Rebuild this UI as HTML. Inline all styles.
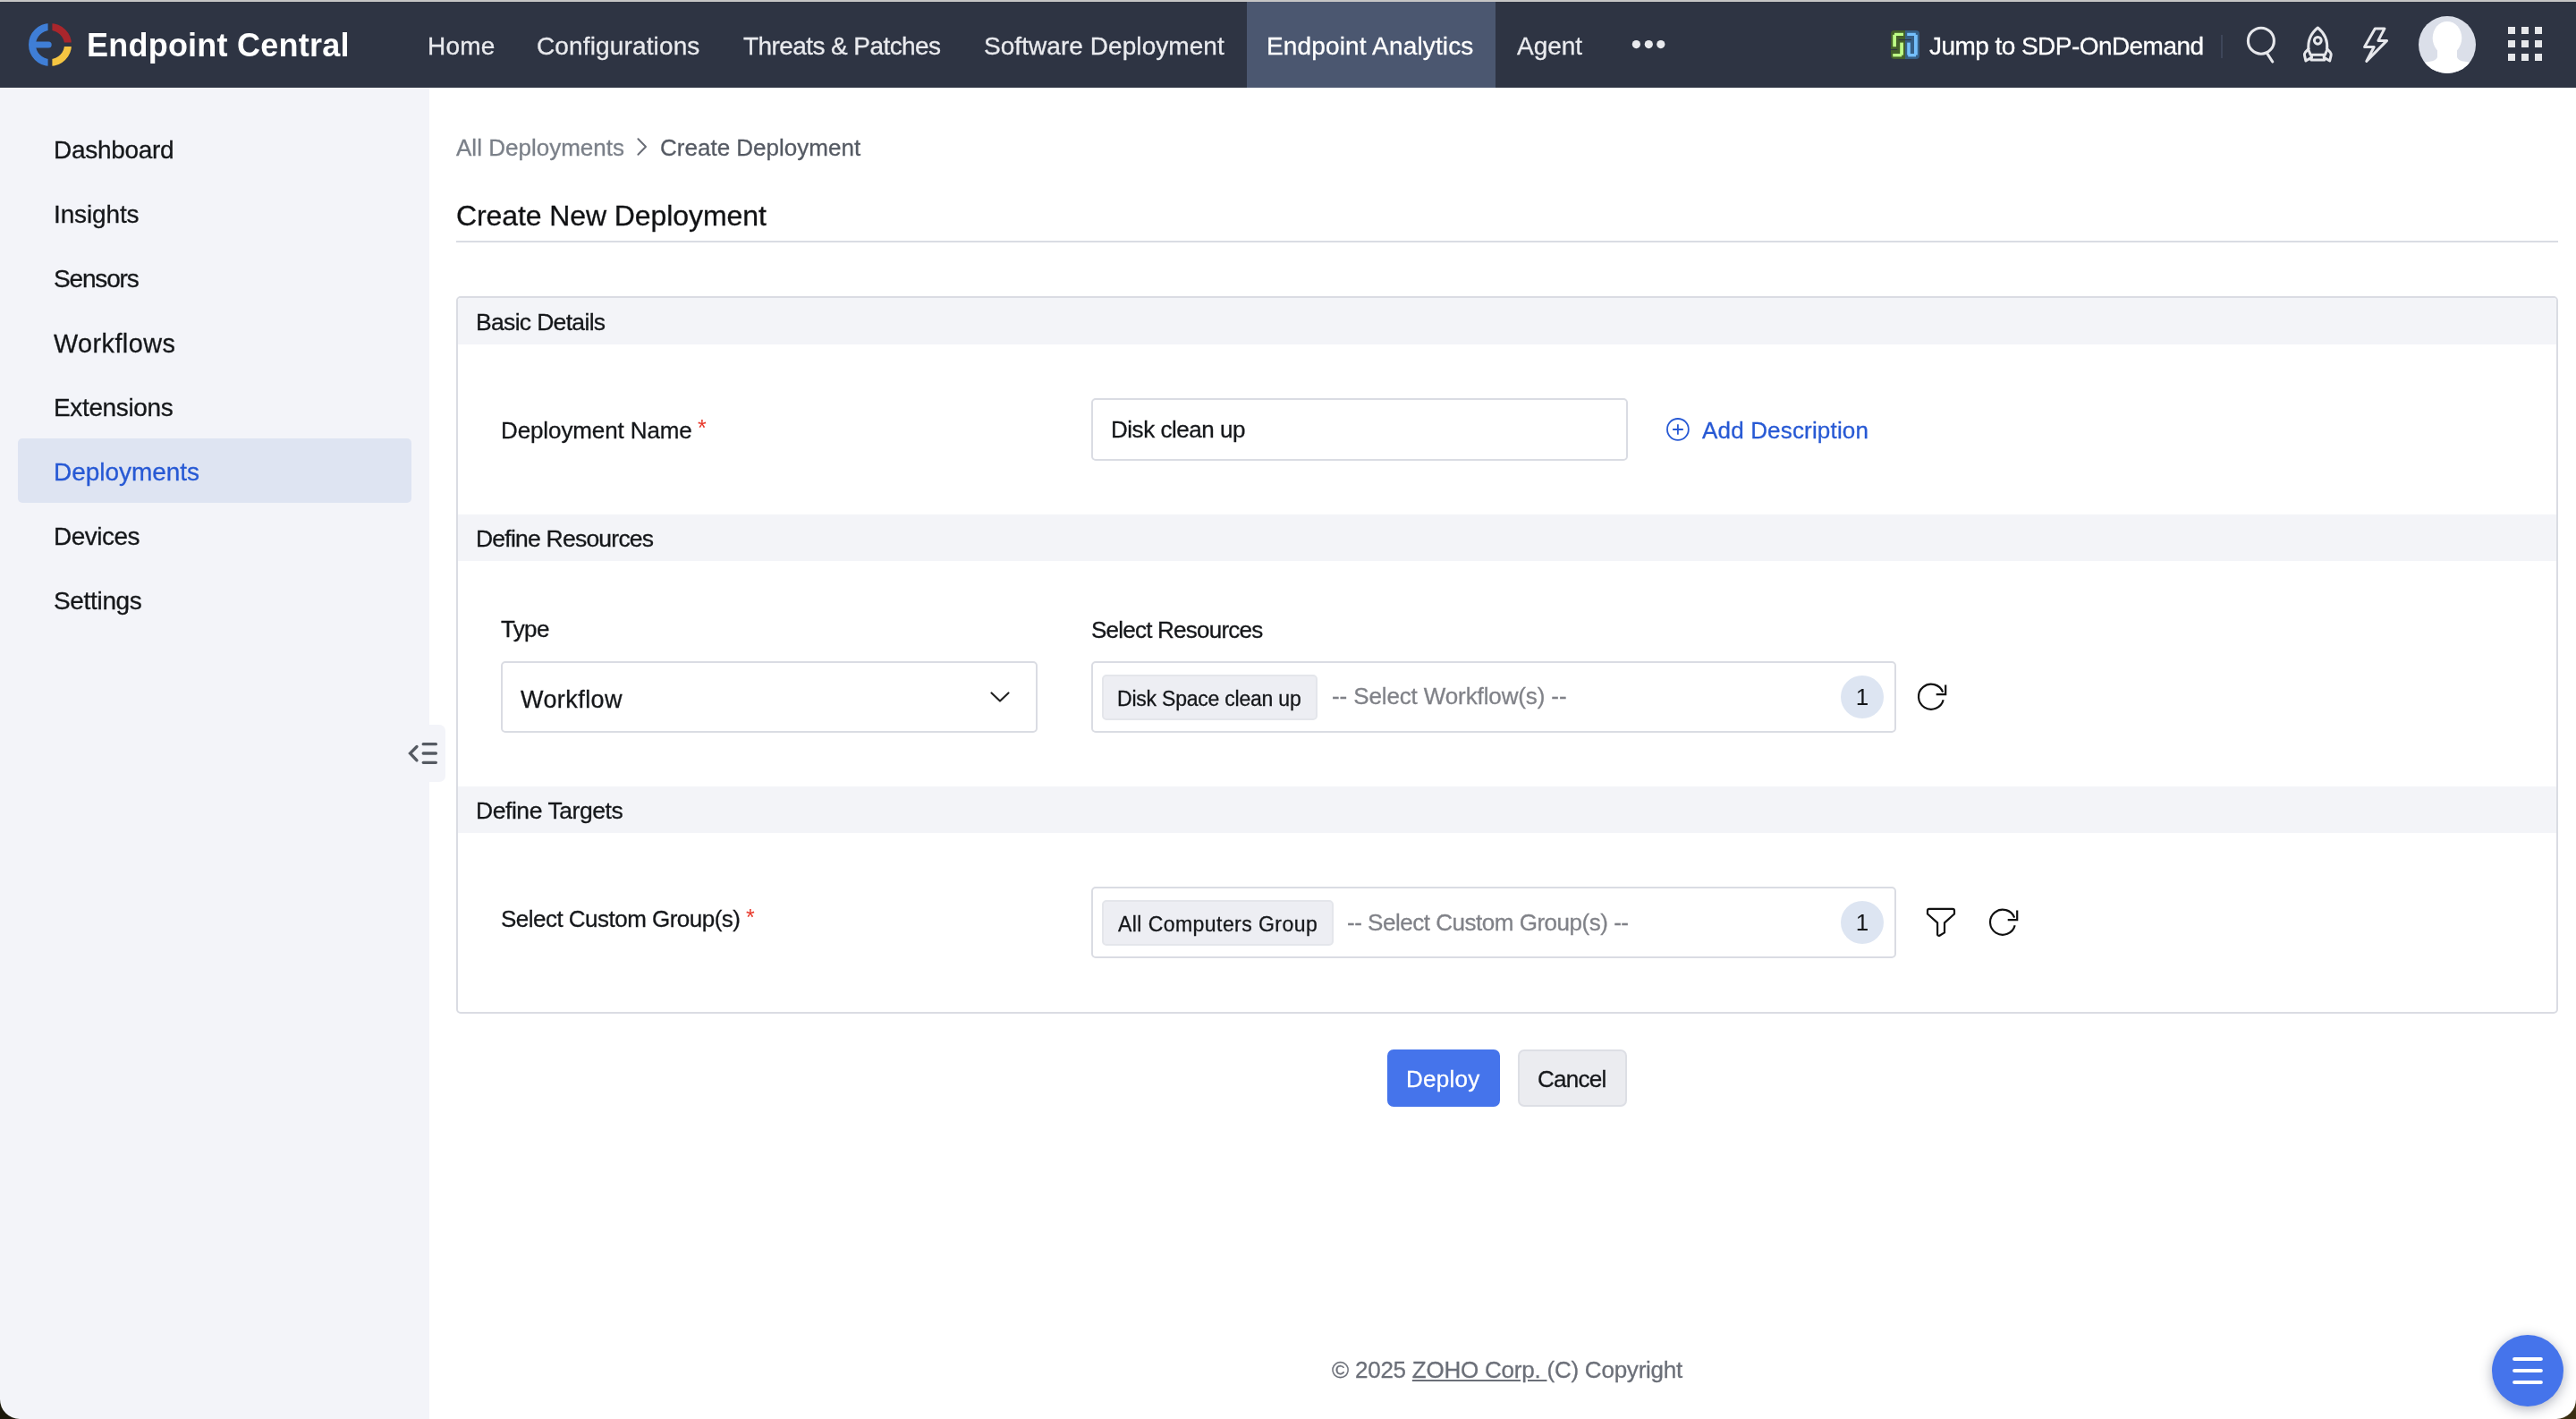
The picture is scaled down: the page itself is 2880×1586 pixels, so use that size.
<!DOCTYPE html>
<html lang="en">
<head>
<meta charset="utf-8">
<title>Endpoint Central - Create Deployment</title>
<style>
*{box-sizing:border-box;margin:0;padding:0}
html,body{width:2880px;height:1586px;overflow:hidden;background:#fff}
body{position:relative;font-family:"Liberation Sans",sans-serif;color:#15171a}
.t{will-change:transform;-webkit-text-stroke:0.3px currentColor;position:absolute;white-space:nowrap;line-height:40px;height:40px;display:block}
.abs{position:absolute}
svg.i{position:absolute;overflow:visible}
.topstrip{position:absolute;left:0;top:0;width:2880px;height:2px;background:linear-gradient(#c8c8c8 0,#c8c8c8 50%,#d4d3d1 50%,#d4d3d1 100%)}
header{position:absolute;left:0;top:2px;width:2880px;height:96px;background:#2e3443;box-shadow:0 1px 3px rgba(0,0,0,.25)}
header .t,header .abs,header svg.i{margin-top:-2px}
.navactive{position:absolute;left:1393.5px;top:2px;width:278px;height:96px;background:#4b5770}
aside{position:absolute;left:0;top:98px;width:480px;height:1488px;background:#f3f4f9}
aside .t{margin-top:-98px}
.sactive{position:absolute;left:20px;top:392px;width:440px;height:72px;border-radius:5px;background:#dee4f2}
.stab{position:absolute;left:480px;top:810px;width:18px;height:64px;background:#f3f4f9;border-radius:0 7px 7px 0}
main{position:absolute;left:480px;top:98px;width:2400px;height:1488px;background:#fff}
main .t,main .abs,main svg.i{margin-left:-480px;margin-top:-98px}
.hr{left:510px;top:269px;width:2350px;height:2px;background:#dadce3}
.panel{left:510px;top:331px;width:2350px;height:802px;border:2px solid #dadce3;border-radius:5px;background:#fff}
.sec{left:512px;width:2346px;height:52px;background:#f3f4f8}
.box{border:2px solid #dadce3;border-radius:5px;background:#fff}
.chip{border:2px solid #e4e6eb;border-radius:5px;background:#edeef3}
.badge{will-change:transform;width:48px;height:48px;border-radius:50%;background:#dde5f2;text-align:center;font-size:26px;line-height:48px;color:#15171a}
.star{color:#e8392b;font-size:25px;-webkit-text-stroke:0}
.btn{border-radius:7px}
.fab{left:2786px;top:1492px;width:80px;height:80px;border-radius:50%;background:#4574eb;box-shadow:0 3px 14px rgba(40,50,80,.38)}
</style>
</head>
<body>
<div class="topstrip"></div>

<header>
  <svg class="i" style="left:24px;top:18px" width="64" height="64" viewBox="24 18 64 64" fill="none" stroke-width="8">
    <path d="M56 30A20 20 0 0 0 56 70" stroke="#3f7ed6"/>
    <path d="M56 30A20 20 0 0 1 76 50" stroke="#a9262c"/>
    <path d="M76 50A20 20 0 0 1 56 70" stroke="#f5c542"/>
    <path d="M53.6 24H58.4V40H53.6ZM53.6 60H58.4V76H53.6ZM68 47.4H82V52H68Z" fill="#2e3443" stroke="none"/>
    <path d="M37 50H54.2" stroke="#3f7ed6" stroke-width="7" stroke-linecap="round"/>
  </svg>
  <span class="t" style="left:97.2px;top:31.1px;font-size:36px;font-weight:700;-webkit-text-stroke:0;letter-spacing:0.23px;color:#ffffff;">Endpoint Central</span>
  <nav>
    <div class="navactive abs"></div>
    <span class="t" style="left:477.7px;top:31.9px;font-size:28px;letter-spacing:0.23px;color:#e9eaee;">Home</span>
    <span class="t" style="left:600.2px;top:31.9px;font-size:28px;letter-spacing:0.14px;color:#e9eaee;">Configurations</span>
    <span class="t" style="left:831.2px;top:31.9px;font-size:28px;letter-spacing:-0.58px;color:#e9eaee;">Threats &amp; Patches</span>
    <span class="t" style="left:1099.9px;top:31.9px;font-size:28px;letter-spacing:0.06px;color:#e9eaee;">Software Deployment</span>
    <span class="t" style="left:1416.4px;top:31.9px;font-size:28px;letter-spacing:0.15px;color:#ffffff;">Endpoint Analytics</span>
    <span class="t" style="left:1696.0px;top:31.9px;font-size:28px;letter-spacing:-0.05px;color:#e9eaee;">Agent</span>
    <svg class="i" style="left:1820px;top:40px" width="48" height="20" viewBox="1820 40 48 20" fill="#e9eaee">
      <circle cx="1829.4" cy="49.6" r="4.6"/><circle cx="1843.3" cy="49.6" r="4.6"/><circle cx="1856.8" cy="49.6" r="4.6"/>
    </svg>
  </nav>
  <!-- SDP icon -->
  <svg class="i" style="left:2114px;top:34px" width="32" height="32" viewBox="0 0 16 16" shape-rendering="auto">
    <path d="M2 0H8V16H2A2 2 0 0 1 0 14V2A2 2 0 0 1 2 0Z" fill="#44602a"/>
    <path d="M8 0H14A2 2 0 0 1 16 2V14A2 2 0 0 1 14 16H8Z" fill="#365f85"/>
    <rect x="2" y="1.4" width="5" height="1.6" fill="#bdfc85"/>
    <rect x="1.1" y="2.4" width="1.9" height="6.7" fill="#bdfc85"/>
    <rect x="5.1" y="6.8" width="1.9" height="7" fill="#bdfc85"/>
    <rect x="1.1" y="13" width="5" height="1.7" fill="#bdfc85"/>
    <rect x="4.3" y="5" width="7.2" height="0.5" fill="#2e3443"/>
    <rect x="0" y="10.5" width="3.6" height="0.5" fill="#2e3443"/>
    <rect x="9.1" y="1.4" width="4.8" height="1.6" fill="#74c0fc"/>
    <rect x="13" y="2.4" width="1.9" height="11.4" fill="#74c0fc"/>
    <rect x="9.1" y="6.8" width="1.8" height="7" fill="#74c0fc"/>
    <rect x="9.6" y="13" width="4.4" height="1.7" fill="#74c0fc"/>
  </svg>
  <span class="t" style="left:2156.7px;top:31.9px;font-size:28px;letter-spacing:-0.55px;color:#ffffff;">Jump to SDP-OnDemand</span>
  <div class="abs" style="left:2482.5px;top:39px;width:2px;height:26px;background:#3e4659"></div>
  <!-- search -->
  <svg class="i" style="left:2505px;top:25px" width="50" height="50" viewBox="2505 25 50 50" fill="none" stroke="#e6e7eb" stroke-width="3.1" stroke-linecap="round">
    <circle cx="2527.9" cy="45.7" r="14.5"/>
    <path d="M2534.6 59.6L2540.7 69"/>
  </svg>
  <!-- rocket -->
  <svg class="i" style="left:2570px;top:25px" width="44" height="50" viewBox="2570 25 44 50" fill="none" stroke="#e6e7eb" stroke-width="3" stroke-linejoin="round" stroke-linecap="round">
    <path d="M2591.3 31C2583.4 37.3 2579.9 46 2581 56L2583.2 61.2H2599.4L2601.6 56C2602.7 46 2599.2 37.3 2591.3 31Z"/>
    <circle cx="2591.3" cy="45.3" r="3.9"/>
    <path d="M2581 54.5L2577.3 58.6C2576.3 59.8 2576.2 60.6 2576.5 61.8L2577.9 68L2584.3 64.2"/>
    <path d="M2601.6 54.5L2605.3 58.6C2606.3 59.8 2606.4 60.6 2606.1 61.8L2604.7 68L2598.3 64.2"/>
    <path d="M2584.6 61.4L2583.9 66.9H2598.7L2598 61.4"/>
  </svg>
  <!-- bolt -->
  <svg class="i" style="left:2636px;top:25px" width="40" height="50" viewBox="2636 25 40 50" fill="none" stroke="#e6e7eb" stroke-width="3" stroke-linejoin="round">
    <path d="M2655.3 31.9H2666L2658.9 45.4H2668.6L2645.8 68.4L2654.2 52.5H2643.6Z"/>
  </svg>
  <!-- avatar -->
  <svg class="i" style="left:2704px;top:18px" width="64" height="64" viewBox="0 0 64 64">
    <defs><clipPath id="av"><circle cx="32" cy="32" r="32"/></clipPath></defs>
    <circle cx="32" cy="32" r="32" fill="#dbdfe9"/>
    <g clip-path="url(#av)" fill="#ffffff">
      <ellipse cx="32" cy="24.5" rx="16.3" ry="18.6"/>
      <path d="M21 38H43V45C43 48 46 49.6 50 50.6L62 52.5V66H2V52.5L14 50.6C18 49.6 21 48 21 45Z"/>
    </g>
  </svg>
  <!-- app grid -->
  <svg class="i" style="left:2804px;top:30px" width="38" height="38" viewBox="0 0 38 38" fill="#e6e7ea">
    <rect x="0" y="0" width="8" height="8"/><rect x="15" y="0" width="8" height="8"/><rect x="30" y="0" width="8" height="8"/>
    <rect x="0" y="15" width="8" height="8"/><rect x="15" y="15" width="8" height="8"/><rect x="30" y="15" width="8" height="8"/>
    <rect x="0" y="30" width="8" height="8"/><rect x="15" y="30" width="8" height="8"/><rect x="30" y="30" width="8" height="8"/>
  </svg>
</header>

<aside>
  <div class="sactive"></div>
  <span class="t" style="left:60.0px;top:147.5px;font-size:28px;letter-spacing:-0.30px;color:#15171a;">Dashboard</span>
  <span class="t" style="left:60.0px;top:219.5px;font-size:28px;letter-spacing:-0.14px;color:#15171a;">Insights</span>
  <span class="t" style="left:60.0px;top:291.5px;font-size:28px;letter-spacing:-1.17px;color:#15171a;">Sensors</span>
  <span class="t" style="left:60.0px;top:364.0px;font-size:28.8px;letter-spacing:0.44px;color:#15171a;">Workflows</span>
  <span class="t" style="left:60.0px;top:435.5px;font-size:28px;letter-spacing:-0.36px;color:#15171a;">Extensions</span>
  <span class="t" style="left:60.0px;top:507.5px;font-size:28px;letter-spacing:-0.03px;color:#2759d4;">Deployments</span>
  <span class="t" style="left:60.0px;top:579.5px;font-size:28px;letter-spacing:-0.52px;color:#15171a;">Devices</span>
  <span class="t" style="left:60.0px;top:651.5px;font-size:28px;letter-spacing:-0.33px;color:#15171a;">Settings</span>
</aside>

<main>
  <!-- breadcrumb -->
  <span class="t" style="left:510.0px;top:144.7px;font-size:26px;letter-spacing:0.01px;color:#7b8089;">All Deployments</span>
  <svg class="i" style="left:706px;top:150px" width="24" height="30" viewBox="706 150 24 30" fill="none" stroke="#6a6e77" stroke-width="2" stroke-linecap="round" stroke-linejoin="round">
    <path d="M713.4 155.2L722 164L713.4 172.8"/>
  </svg>
  <span class="t" style="left:737.5px;top:144.7px;font-size:26px;letter-spacing:0.01px;color:#555a63;">Create Deployment</span>
  <span class="t" style="left:510.0px;top:221.2px;font-size:32px;letter-spacing:-0.09px;color:#111214;">Create New Deployment</span>
  <div class="abs hr"></div>

  <section class="abs panel"></section>
  <div class="abs sec" style="top:333px;border-radius:3px 3px 0 0"></div>
  <span class="t" style="left:532.0px;top:339.8px;font-size:26.5px;letter-spacing:-0.67px;color:#15171a;">Basic Details</span>
  <span class="t" style="left:560.0px;top:460.6px;font-size:26px;letter-spacing:-0.11px;color:#15171a;">Deployment Name</span>
  <span class="t star" style="left:779.6px;top:458px">*</span>
  <div class="abs box" style="left:1220px;top:445px;width:600px;height:70px"></div>
  <span class="t" style="left:1242.0px;top:460.0px;font-size:26px;letter-spacing:-0.47px;color:#15171a;">Disk clean up</span>
  <svg class="i" style="left:1860px;top:464px" width="32" height="32" viewBox="1860 464 32 32" fill="none" stroke="#2759d4" stroke-width="1.8" stroke-linecap="butt">
    <circle cx="1875.9" cy="479.9" r="11.9"/>
    <path d="M1870.1 480H1881.8M1875.9 474.2V485.8"/>
  </svg>
  <span class="t" style="left:1902.6px;top:460.5px;font-size:26px;letter-spacing:0.17px;color:#2759d4;">Add Description</span>

  <div class="abs sec" style="top:575px"></div>
  <span class="t" style="left:532.0px;top:581.8px;font-size:26.5px;letter-spacing:-0.77px;color:#15171a;">Define Resources</span>
  <span class="t" style="left:560.0px;top:683.2px;font-size:26px;letter-spacing:-0.67px;color:#15171a;">Type</span>
  <div class="abs box" style="left:560px;top:739px;width:600px;height:80px"></div>
  <span class="t" style="left:582.0px;top:762.2px;font-size:27px;letter-spacing:0.43px;color:#15171a;">Workflow</span>
  <svg class="i" style="left:1100px;top:765px" width="36" height="28" viewBox="1100 765 36 28" fill="none" stroke="#222" stroke-width="2.2" stroke-linecap="round" stroke-linejoin="round">
    <path d="M1108.5 774.5L1118 783.5L1127.5 774.5"/>
  </svg>
  <span class="t" style="left:1220.0px;top:683.5px;font-size:26px;letter-spacing:-0.77px;color:#15171a;">Select Resources</span>
  <div class="abs box" style="left:1220px;top:739px;width:900px;height:80px"></div>
  <div class="abs chip" style="left:1232px;top:753.5px;width:241px;height:51px"></div>
  <span class="t" style="left:1249.2px;top:760.9px;font-size:23px;letter-spacing:-0.22px;color:#15171a;">Disk Space clean up</span>
  <span class="t" style="left:1488.5px;top:758.4px;font-size:26px;letter-spacing:-0.12px;color:#808288;">-- Select Workflow(s) --</span>
  <div class="abs badge" style="left:2058px;top:755px">1</div>
  <svg class="i" style="left:2140px;top:760px" width="40" height="40" viewBox="2140 760 40 40" fill="none" stroke="#111" stroke-width="2.2" stroke-linecap="butt" stroke-linejoin="miter">
    <path d="M2172.17 773.71A14.05 14.05 0 1 0 2172.66 782.24"/>
    <path d="M2175.2 765.6V776.1H2164.7"/>
  </svg>

  <div class="abs sec" style="top:879px"></div>
  <span class="t" style="left:532.0px;top:885.8px;font-size:26.5px;letter-spacing:-0.44px;color:#15171a;">Define Targets</span>
  <span class="t" style="left:560.0px;top:1007.0px;font-size:26px;letter-spacing:-0.52px;color:#15171a;">Select Custom Group(s)</span>
  <span class="t star" style="left:834.2px;top:1004.5px">*</span>
  <div class="abs box" style="left:1220px;top:991px;width:900px;height:80px"></div>
  <div class="abs chip" style="left:1232px;top:1005.5px;width:259px;height:51px"></div>
  <span class="t" style="left:1250.4px;top:1013.0px;font-size:23px;letter-spacing:0.44px;color:#15171a;">All Computers Group</span>
  <span class="t" style="left:1506.4px;top:1010.6px;font-size:26px;letter-spacing:-0.48px;color:#808288;">-- Select Custom Group(s) --</span>
  <div class="abs badge" style="left:2058px;top:1007px">1</div>
  <svg class="i" style="left:2148px;top:1008px" width="44" height="44" viewBox="2148 1008 44 44" fill="none" stroke="#111" stroke-width="2.2" stroke-linejoin="round" stroke-linecap="round">
    <path d="M2157 1015.9H2183A2 2 0 0 1 2185 1017.9V1021.5L2174 1031.4V1042.4L2168.4 1045.7A1.6 1.6 0 0 1 2166.1 1044.4V1031.4L2155 1021.5V1017.9A2 2 0 0 1 2157 1015.9Z"/>
  </svg>
  <svg class="i" style="left:2220px;top:1012px" width="40" height="40" viewBox="2220 1012 40 40" fill="none" stroke="#111" stroke-width="2.2" stroke-linecap="butt" stroke-linejoin="miter">
    <path d="M2252.17 1025.71A14.05 14.05 0 1 0 2252.66 1034.24"/>
    <path d="M2255.2 1017.6V1028.1H2244.7"/>
  </svg>

  <div class="abs btn" style="left:1551px;top:1173px;width:126px;height:64px;background:#4574eb"></div>
  <span class="t" style="left:1572.2px;top:1186.0px;font-size:26px;letter-spacing:0.26px;color:#ffffff;">Deploy</span>
  <div class="abs btn" style="left:1697px;top:1173px;width:122px;height:64px;background:#ebecf0;border:2px solid #dddfe5"></div>
  <span class="t" style="left:1718.7px;top:1186.0px;font-size:26px;letter-spacing:-0.74px;color:#15171a;">Cancel</span>

  <footer><span class="t" style="left:1488.5px;top:1511.1px;font-size:26px;letter-spacing:-0.23px;color:#6b6f78;">© 2025 <u>ZOHO Corp. </u>(C) Copyright</span></footer>

  <div class="abs fab"></div>
  <svg class="i" style="left:2806px;top:1512px" width="40" height="40" viewBox="2806 1512 40 40" fill="none" stroke="#fff" stroke-width="4.2" stroke-linecap="round">
    <path d="M2811.2 1519H2840.8M2811.2 1532H2840.8M2811.2 1545H2840.8"/>
  </svg>
</main>

<div class="stab"></div>
<svg class="i" style="left:452px;top:826px" width="42" height="32" viewBox="452 826 42 32" fill="none" stroke="#555a62" stroke-width="3.3" stroke-linecap="round" stroke-linejoin="miter">
  <path d="M466 834.5L458.5 842L466 849.8"/>
  <path d="M473.2 831.7H487.4M473.2 842H487.4M473.2 852.3H487.4"/>
</svg>

<!-- window rounded corners (desktop showing through) -->
<svg class="i" style="left:0;top:1564px" width="22" height="22" viewBox="0 0 22 22"><path d="M0 0A22 22 0 0 0 22 22H0Z" fill="#1c190b"/></svg>
<svg class="i" style="left:2858px;top:1564px" width="22" height="22" viewBox="0 0 22 22"><path d="M22 0A22 22 0 0 1 0 22H22Z" fill="#3a2f12"/></svg>
</body>
</html>
